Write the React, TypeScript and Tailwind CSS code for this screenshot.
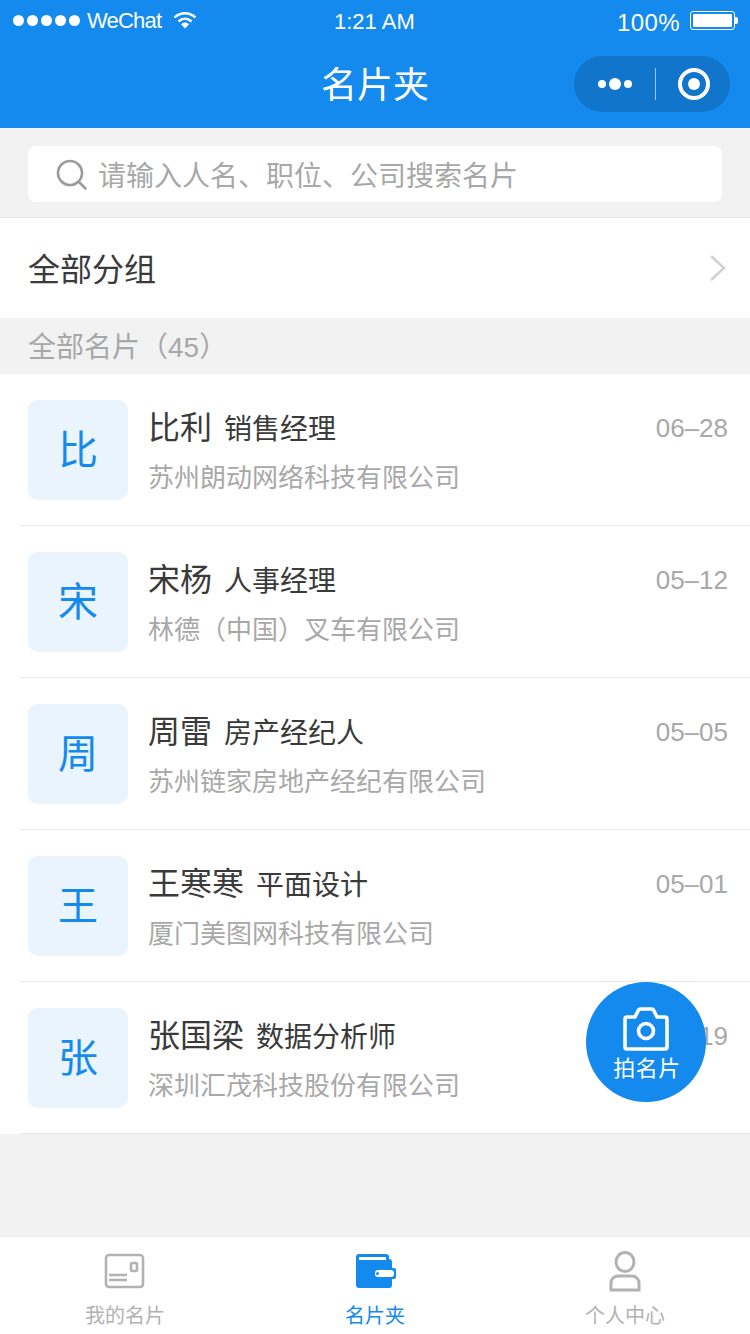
import React from 'react';

const FONT = '[font-family:"Liberation_Sans","Noto_Sans_CJK_SC",sans-serif]';

const cards = [
  { initial: '比', name: '比利', title: '销售经理', company: '苏州朗动网络科技有限公司', date: '06-28' },
  { initial: '宋', name: '宋杨', title: '人事经理', company: '林德（中国）叉车有限公司', date: '05-12' },
  { initial: '周', name: '周雷', title: '房产经纪人', company: '苏州链家房地产经纪有限公司', date: '05-05' },
  { initial: '王', name: '王寒寒', title: '平面设计', company: '厦门美图网科技有限公司', date: '05-01' },
  { initial: '张', name: '张国梁', title: '数据分析师', company: '深圳汇茂科技股份有限公司', date: '04-19' },
];

const StatusBar = () => (
  <div className="h-10 flex items-center justify-between pl-[13px] pr-[12px] relative text-white">
    <div className="flex items-center">
      <div className="flex gap-[3px]">
        {[0, 1, 2, 3, 4].map((i) => (
          <span key={i} className="w-[11px] h-[11px] rounded-full bg-white" />
        ))}
      </div>
      <span className="ml-[7px] text-[22px] tracking-[-0.8px]">WeChat</span>
      <svg className="ml-[12px]" width="24" height="18" viewBox="0 0 24 18">
        <path d="M1.5 6.5 C7.5 0.8 16.5 0.8 22.5 6.5" fill="none" stroke="#fff" strokeWidth="2.4" />
        <path d="M5.5 10.5 C9.5 6.8 14.5 6.8 18.5 10.5" fill="none" stroke="#fff" strokeWidth="2.4" />
        <path d="M8 13.2 C10.5 11 13.5 11 16 13.2 L12 17.5 Z" fill="#fff" />
      </svg>
    </div>
    <span className="absolute left-[334px] top-[7px] text-[22px] leading-[30px]">1:21 AM</span>
    <div className="flex items-center">
      <span className="text-[24px] leading-[30px] mt-[6px] tracking-[0.4px]">100%</span>
      <div className="ml-[10px] w-[45px] h-[19px] border border-white rounded-[3px] p-[2px]">
        <div className="w-full h-full bg-white rounded-[1px]" />
      </div>
      <div className="w-[3px] h-[7px] bg-white rounded-r-[2px]" />
    </div>
  </div>
);

const NavBar = () => (
  <div className="h-[88px] relative flex items-center justify-center text-white">
    <span className="text-[36px] leading-[50px] mt-[4px]">名片夹</span>
    <div className="absolute right-[20px] top-[16px] w-[156px] h-[56px] rounded-full bg-[#1175cb] flex items-center">
      <div className="w-[81px] flex items-center justify-center gap-[3px]">
        <span className="w-[8px] h-[8px] rounded-full bg-white" />
        <span className="w-[12px] h-[12px] rounded-full bg-white" />
        <span className="w-[8px] h-[8px] rounded-full bg-white" />
      </div>
      <div className="w-[1px] h-[32px] bg-white/60" />
      <div className="flex-1 flex items-center justify-center pl-[2px]">
        <div className="w-[32px] h-[32px] rounded-full border-[4px] border-white flex items-center justify-center">
          <span className="w-[12px] h-[12px] rounded-full bg-white" />
        </div>
      </div>
    </div>
  </div>
);

const CardRow = ({ card }: { card: (typeof cards)[number] }) => (
  <div className="ml-[20px] h-[152px] border-b border-[#e8e8e8] flex pl-[8px] pt-[26px] relative">
    <div className="w-[100px] h-[100px] rounded-[10px] bg-[#e9f4fd] flex items-center justify-center text-[#148aee] text-[40px] leading-none">
      {card.initial}
    </div>
    <div className="ml-[20px] flex-1">
      <div className="flex items-baseline h-[52px] mt-[2px]">
        <span className="text-[32px] leading-[52px] text-[#3a3a3a]">{card.name}</span>
        <span className="ml-[12px] text-[28px] leading-[52px] text-[#3a3a3a]">{card.title}</span>
      </div>
      <div className="text-[26px] leading-[36px] mt-[6px] text-[#a8a8a8]">{card.company}</div>
    </div>
    <span className="absolute right-[22px] top-[36px] text-[26px] leading-[36px] text-[#a8a8a8]">
      {card.date.replace('-', '–')}
    </span>
  </div>
);

const TabBar = () => (
  <div className="h-[98px] bg-white border-t border-[#f0f0f0] flex">
    <div className="flex-1 flex flex-col items-center">
      <svg className="mt-[16px]" width="42" height="38" viewBox="0 0 42 38" fill="none" stroke="#b2b2b2" strokeWidth="2.6">
        <rect x="2" y="2" width="37" height="32" rx="3" />
        <rect x="27" y="10" width="6" height="8" rx="1.5" />
        <path d="M5 22h18M5 27h18" />
      </svg>
      <span className="text-[20px] leading-[28px] mt-[11px] text-[#b2b2b2]">我的名片</span>
    </div>
    <div className="flex-1 flex flex-col items-center">
      <svg className="mt-[16px] ml-[2px]" width="44" height="38" viewBox="0 0 44 38">
        <path d="M5 1h27a3 3 0 0 1 3 3v2a3 3 0 0 1 3 3v23a3 3 0 0 1-3 3H5a3 3 0 0 1-3-3V4a3 3 0 0 1 3-3z" fill="#148aee" />
        <rect x="5" y="4" width="27" height="3" fill="#fff" />
        <rect x="19" y="15" width="23" height="11" rx="2" fill="#148aee" />
        <rect x="21" y="17" width="19" height="7" rx="3" fill="#fff" />
        <circle cx="23.5" cy="20.5" r="1.5" fill="#148aee" />
      </svg>
      <span className="text-[20px] leading-[28px] mt-[11px] text-[#148aee]">名片夹</span>
    </div>
    <div className="flex-1 flex flex-col items-center">
      <svg className="mt-[14px]" width="34" height="42" viewBox="0 0 34 42" fill="none" stroke="#b2b2b2" strokeWidth="3">
        <ellipse cx="17" cy="11" rx="9" ry="9.5" />
        <path d="M3 39v-7a7 7 0 0 1 7-7h14a7 7 0 0 1 7 7v7z" />
      </svg>
      <span className="text-[20px] leading-[28px] mt-[9px] text-[#b2b2b2]">个人中心</span>
    </div>
  </div>
);

export default function App() {
  return (
    <div className={`${FONT} w-[750px] h-[1334px] bg-[#f2f2f2] relative overflow-hidden flex flex-col`}>
      <div className="bg-[#148aee] h-[128px]">
        <StatusBar />
        <NavBar />
      </div>

      <div className="h-[90px] px-[28px] pt-[18px] border-b border-[#e8e8e8]">
        <div className="h-[56px] bg-white rounded-[8px] flex items-center pl-[28px]">
          <svg className="mt-[2px]" width="32" height="32" viewBox="0 0 32 32" fill="none" stroke="#9b9b9b" strokeWidth="2.6">
            <circle cx="14" cy="14" r="12" />
            <path d="M23 23l6.5 6.5" strokeLinecap="round" />
          </svg>
          <span className="ml-[10px] mt-[5px] text-[28px] text-[#a8a8a8]">请输入人名、职位、公司搜索名片</span>
        </div>
      </div>

      <div className="h-[100px] bg-white flex items-center justify-between pl-[28px] pr-[23px]">
        <span className="text-[32px] text-[#3a3a3a] mt-[3px]">全部分组</span>
        <svg width="18" height="28" viewBox="0 0 18 28" fill="none" stroke="#cfcfcf" strokeWidth="2.4">
          <path d="M2 2l13 12L2 26" />
        </svg>
      </div>

      <div className="h-[56px] pl-[28px] pt-[3px] flex items-center text-[28px] text-[#a8a8a8]">全部名片（45）</div>

      <div className="bg-white h-[760px]">
        {cards.map((card) => (
          <CardRow key={card.name} card={card} />
        ))}
      </div>

      <div className="flex-1" />
      <TabBar />

      <div className="absolute left-[586px] top-[982px] w-[120px] h-[120px] rounded-full bg-[#148aee] flex flex-col items-center text-white">
        <svg className="mt-[25px]" width="46" height="44" viewBox="0 0 46 44" fill="none" stroke="#fff" strokeWidth="3.6" strokeLinejoin="round">
          <path d="M2 12a2 2 0 0 1 2-2h8l3-6a3 3 0 0 1 3-2h10a3 3 0 0 1 3 2l3 6h8a2 2 0 0 1 2 2v28a2 2 0 0 1-2 2H4a2 2 0 0 1-2-2z" />
          <circle cx="23" cy="24" r="7.5" />
        </svg>
        <span className="text-[22px] leading-[30px] mt-[3px] ml-[2px] tracking-[0.5px]">拍名片</span>
      </div>
    </div>
  );
}
